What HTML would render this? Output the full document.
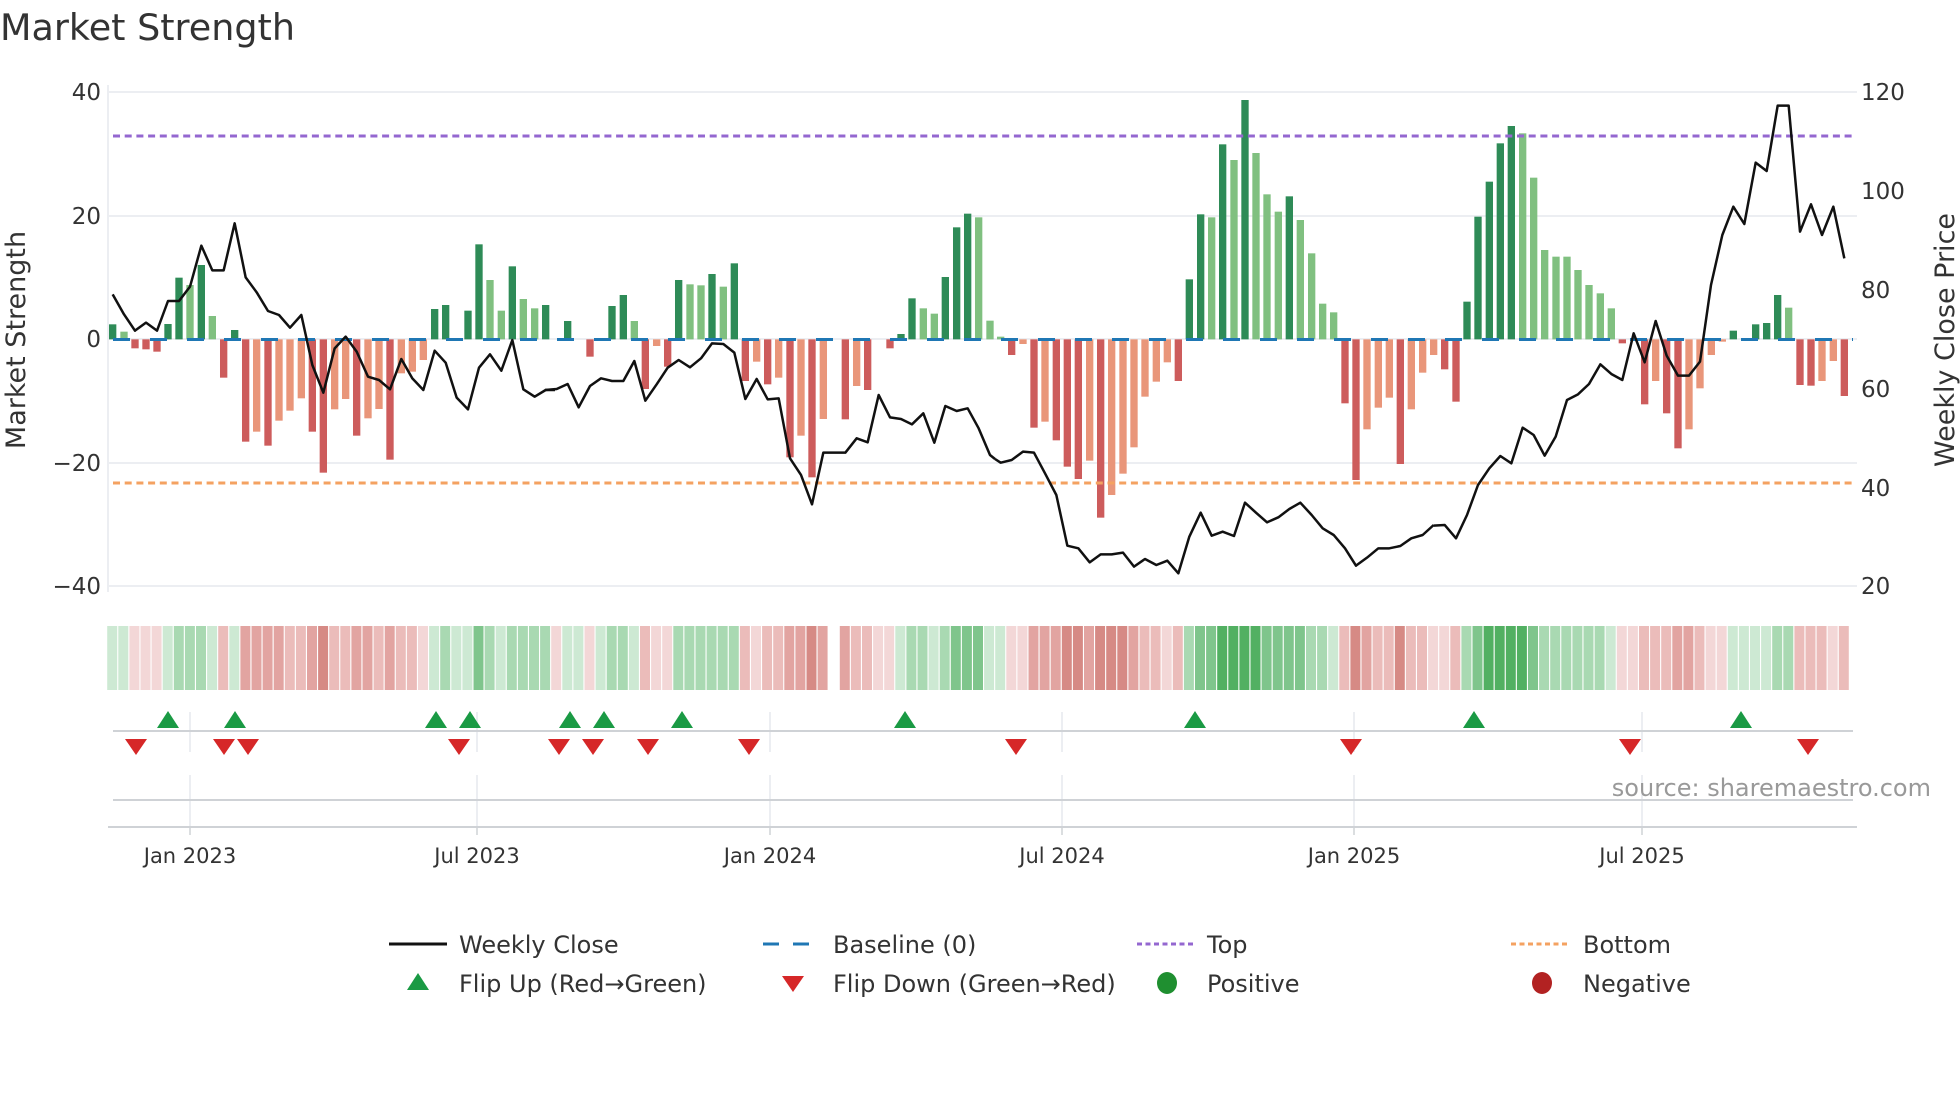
<!DOCTYPE html>
<html><head><meta charset="utf-8"><style>
html,body{margin:0;padding:0;background:#fff;}
svg{display:block;font-family:"DejaVu Sans","Liberation Sans",sans-serif;}
.dg{fill:#2e8b57}.lg{fill:#80c080}.r{fill:#cd5c5c}.lo{fill:#e9967a}
.ga{fill:#cde9d3}.gb{fill:#a9d9b2}.gc{fill:#7fc58c}.gd{fill:#52b062}
.ra{fill:#f3d7d7}.rb{fill:#ebbcba}.rc{fill:#e2a4a1}.rd{fill:#d68a85}
</style></head><body>
<svg width="1960" height="1102" viewBox="0 0 1960 1102" xmlns="http://www.w3.org/2000/svg">
<text x="0" y="40" font-size="36.5" fill="#333">Market Strength</text>
<!-- grid -->
<g stroke="#eceef2" stroke-width="2">
<line x1="108" y1="92" x2="1857" y2="92"/><line x1="108" y1="216" x2="1857" y2="216"/>
<line x1="108" y1="339" x2="1857" y2="339"/><line x1="108" y1="463" x2="1857" y2="463"/>
<line x1="108" y1="586" x2="1857" y2="586"/><line x1="108" y1="85" x2="108" y2="592"/>
</g>
<!-- left ticks -->
<g font-size="23" fill="#333" text-anchor="end">
<text x="101" y="100">40</text><text x="101" y="224">20</text><text x="101" y="347">0</text>
<text x="101" y="471">−20</text><text x="101" y="594">−40</text></g>
<g font-size="23" fill="#333">
<text x="1861" y="100">120</text><text x="1861" y="199">100</text><text x="1861" y="298">80</text>
<text x="1861" y="397">60</text><text x="1861" y="496">40</text><text x="1861" y="594">20</text></g>
<text transform="translate(25,340) rotate(-90)" font-size="27" fill="#333" text-anchor="middle">Market Strength</text>
<text transform="translate(1954,340) rotate(-90)" font-size="27" fill="#333" text-anchor="middle">Weekly Close Price</text>
<!-- bars -->
<g transform="translate(105,85) scale(0.33333)">
<rect class="dg" x="12" y="718" width="22" height="45"/><rect class="lg" x="46" y="740" width="22" height="23"/>
<rect class="r" x="79" y="763" width="22" height="27"/><rect class="r" x="112" y="763" width="22" height="30"/>
<rect class="r" x="145" y="763" width="22" height="37"/><rect class="dg" x="178" y="717" width="22" height="46"/>
<rect class="dg" x="211" y="578" width="22" height="185"/><rect class="lg" x="244" y="600" width="22" height="163"/>
<rect class="dg" x="278" y="540" width="22" height="223"/><rect class="lg" x="311" y="693" width="22" height="70"/>
<rect class="r" x="345" y="763" width="22" height="115"/><rect class="dg" x="378" y="735" width="22" height="28"/>
<rect class="r" x="411" y="763" width="22" height="307"/><rect class="lo" x="444" y="763" width="22" height="277"/>
<rect class="r" x="478" y="763" width="22" height="319"/><rect class="lo" x="511" y="763" width="22" height="244"/>
<rect class="lo" x="544" y="763" width="22" height="214"/><rect class="lo" x="578" y="763" width="22" height="177"/>
<rect class="r" x="611" y="763" width="22" height="277"/><rect class="r" x="644" y="763" width="22" height="400"/>
<rect class="lo" x="678" y="763" width="22" height="210"/><rect class="lo" x="711" y="763" width="22" height="179"/>
<rect class="r" x="744" y="763" width="22" height="289"/><rect class="lo" x="778" y="763" width="22" height="237"/>
<rect class="lo" x="811" y="763" width="22" height="209"/><rect class="r" x="844" y="763" width="22" height="361"/>
<rect class="lo" x="878" y="763" width="22" height="102"/><rect class="lo" x="911" y="763" width="22" height="97"/>
<rect class="lo" x="944" y="763" width="22" height="62"/><rect class="dg" x="978" y="672" width="22" height="91"/>
<rect class="dg" x="1011" y="660" width="22" height="103"/><rect class="dg" x="1078" y="677" width="22" height="86"/>
<rect class="dg" x="1111" y="478" width="22" height="285"/><rect class="lg" x="1144" y="585" width="22" height="178"/>
<rect class="lg" x="1178" y="677" width="22" height="86"/><rect class="dg" x="1211" y="544" width="22" height="219"/>
<rect class="lg" x="1244" y="642" width="22" height="121"/><rect class="lg" x="1278" y="670" width="22" height="93"/>
<rect class="dg" x="1311" y="660" width="22" height="103"/>
</g>
<g transform="translate(545,85) scale(0.33333)">
<rect class="dg" x="57" y="708" width="22" height="55"/><rect class="r" x="124" y="763" width="22" height="52"/>
<rect class="dg" x="190" y="663" width="22" height="100"/><rect class="dg" x="224" y="630" width="22" height="133"/>
<rect class="lg" x="257" y="708" width="22" height="55"/><rect class="r" x="290" y="763" width="22" height="149"/>
<rect class="lo" x="324" y="763" width="22" height="20"/><rect class="r" x="357" y="763" width="22" height="82"/>
<rect class="dg" x="390" y="585" width="22" height="178"/><rect class="lg" x="424" y="598" width="22" height="165"/>
<rect class="lg" x="457" y="601" width="22" height="162"/><rect class="dg" x="490" y="567" width="22" height="196"/>
<rect class="lg" x="524" y="605" width="22" height="158"/><rect class="dg" x="557" y="535" width="22" height="228"/>
<rect class="r" x="590" y="763" width="22" height="125"/><rect class="lo" x="624" y="763" width="22" height="67"/>
<rect class="r" x="657" y="763" width="22" height="135"/><rect class="lo" x="690" y="763" width="22" height="115"/>
<rect class="r" x="724" y="763" width="22" height="354"/><rect class="lo" x="757" y="763" width="22" height="289"/>
<rect class="r" x="790" y="763" width="22" height="414"/><rect class="lo" x="824" y="763" width="22" height="239"/>
<rect class="r" x="890" y="763" width="22" height="240"/><rect class="lo" x="924" y="763" width="22" height="140"/>
<rect class="r" x="957" y="763" width="22" height="152"/><rect class="r" x="1024" y="763" width="22" height="27"/>
<rect class="dg" x="1057" y="747" width="22" height="16"/><rect class="dg" x="1090" y="640" width="22" height="123"/>
<rect class="lg" x="1124" y="670" width="22" height="93"/><rect class="lg" x="1157" y="686" width="22" height="77"/>
<rect class="dg" x="1190" y="576" width="22" height="187"/><rect class="dg" x="1224" y="427" width="22" height="336"/>
<rect class="dg" x="1257" y="386" width="22" height="377"/><rect class="lg" x="1290" y="397" width="22" height="366"/>
<rect class="lg" x="1324" y="707" width="22" height="56"/>
</g>
<g transform="translate(985,85) scale(0.33333)">
<rect class="lg" x="36" y="755" width="22" height="8"/><rect class="r" x="69" y="763" width="22" height="47"/>
<rect class="lo" x="103" y="763" width="22" height="14"/><rect class="r" x="136" y="763" width="22" height="265"/>
<rect class="lo" x="169" y="763" width="22" height="247"/><rect class="r" x="203" y="763" width="22" height="303"/>
<rect class="r" x="236" y="763" width="22" height="382"/><rect class="r" x="269" y="763" width="22" height="419"/>
<rect class="lo" x="303" y="763" width="22" height="364"/><rect class="r" x="336" y="763" width="22" height="535"/>
<rect class="lo" x="369" y="763" width="22" height="467"/><rect class="lo" x="403" y="763" width="22" height="403"/>
<rect class="lo" x="436" y="763" width="22" height="324"/><rect class="lo" x="469" y="763" width="22" height="172"/>
<rect class="lo" x="503" y="763" width="22" height="127"/><rect class="lo" x="536" y="763" width="22" height="69"/>
<rect class="r" x="569" y="763" width="22" height="125"/><rect class="dg" x="602" y="583" width="22" height="180"/>
<rect class="dg" x="636" y="388" width="22" height="375"/><rect class="lg" x="669" y="397" width="22" height="366"/>
<rect class="dg" x="702" y="178" width="22" height="585"/><rect class="lg" x="736" y="225" width="22" height="538"/>
<rect class="dg" x="769" y="45" width="22" height="718"/><rect class="lg" x="802" y="204" width="22" height="559"/>
<rect class="lg" x="835" y="328" width="22" height="435"/><rect class="lg" x="869" y="380" width="22" height="383"/>
<rect class="dg" x="902" y="334" width="22" height="429"/><rect class="lg" x="935" y="405" width="22" height="358"/>
<rect class="lg" x="969" y="505" width="22" height="258"/><rect class="lg" x="1002" y="656" width="22" height="107"/>
<rect class="lg" x="1035" y="682" width="22" height="81"/><rect class="r" x="1069" y="763" width="22" height="192"/>
<rect class="r" x="1102" y="763" width="22" height="422"/><rect class="lo" x="1135" y="763" width="22" height="270"/>
<rect class="lo" x="1169" y="763" width="22" height="205"/><rect class="lo" x="1202" y="763" width="22" height="175"/>
<rect class="r" x="1235" y="763" width="22" height="374"/><rect class="lo" x="1268" y="763" width="22" height="210"/>
<rect class="lo" x="1302" y="763" width="22" height="100"/><rect class="lo" x="1335" y="763" width="22" height="47"/>
</g>
<g transform="translate(1425,85) scale(0.33333)">
<rect class="r" x="48" y="763" width="22" height="90"/><rect class="r" x="82" y="763" width="22" height="187"/>
<rect class="dg" x="115" y="650" width="22" height="113"/><rect class="dg" x="148" y="395" width="22" height="368"/>
<rect class="dg" x="182" y="290" width="22" height="473"/><rect class="dg" x="215" y="175" width="22" height="588"/>
<rect class="dg" x="248" y="123" width="22" height="640"/><rect class="lg" x="282" y="145" width="22" height="618"/>
<rect class="lg" x="315" y="278" width="22" height="485"/><rect class="lg" x="348" y="495" width="22" height="268"/>
<rect class="lg" x="382" y="515" width="22" height="248"/><rect class="lg" x="415" y="515" width="22" height="248"/>
<rect class="lg" x="448" y="555" width="22" height="208"/><rect class="lg" x="481" y="600" width="22" height="163"/>
<rect class="lg" x="515" y="625" width="22" height="138"/><rect class="lg" x="548" y="670" width="22" height="93"/>
<rect class="r" x="581" y="763" width="22" height="12"/><rect class="r" x="648" y="763" width="22" height="195"/>
<rect class="lo" x="681" y="763" width="22" height="125"/><rect class="r" x="714" y="763" width="22" height="222"/>
<rect class="r" x="748" y="763" width="22" height="327"/><rect class="lo" x="781" y="763" width="22" height="270"/>
<rect class="lo" x="814" y="763" width="22" height="147"/><rect class="lo" x="848" y="763" width="22" height="47"/>
<rect class="lo" x="881" y="763" width="22" height="7"/><rect class="dg" x="914" y="737" width="22" height="26"/>
<rect class="dg" x="981" y="718" width="22" height="45"/><rect class="dg" x="1014" y="714" width="22" height="49"/>
<rect class="dg" x="1047" y="630" width="22" height="133"/><rect class="lg" x="1080" y="668" width="22" height="95"/>
<rect class="r" x="1114" y="763" width="22" height="137"/><rect class="r" x="1147" y="763" width="22" height="139"/>
<rect class="lo" x="1180" y="763" width="22" height="125"/><rect class="lo" x="1214" y="763" width="22" height="65"/>
<rect class="r" x="1247" y="763" width="22" height="170"/>
</g>
<!-- reference lines -->
<line x1="113" y1="339.5" x2="1853" y2="339.5" stroke="#1f77b4" stroke-width="3" stroke-dasharray="17 20"/>
<line x1="113" y1="136" x2="1853" y2="136" stroke="#9467d0" stroke-width="3" stroke-dasharray="7 4.7"/>
<line x1="113" y1="483" x2="1853" y2="483" stroke="#f4a261" stroke-width="3" stroke-dasharray="7 4.7"/>
<!-- price line -->
<g fill="none" stroke="#111" stroke-width="7.5" stroke-linejoin="round">
<polyline transform="translate(105,85) scale(0.33333)" points="23,628 57,688 90,737 123,713 156,737 189,648 222,648 255,605 289,482 322,556 356,556 389,415 422,577 455,622 489,678 522,690 555,728 589,690 622,840 655,923 689,790 722,755 755,800 789,875 822,885 855,913 889,822 922,880 955,915 989,797 1022,833 1055,938 1089,973 1122,848 1155,808 1189,857 1222,765 1255,913 1289,935 1322,915 1350,915"/>
<polyline transform="translate(545,85) scale(0.33333)" points="0,915 35,912 68,897 101,967 135,903 168,880 201,888 235,888 268,828 301,947 335,898 368,848 401,825 435,847 468,820 501,775 535,777 568,803 601,942 635,882 668,943 701,940 735,1120 768,1170 801,1258 835,1103 868,1103 901,1103 935,1060 968,1072 1001,930 1035,997 1068,1002 1101,1018 1135,985 1168,1073 1201,963 1235,978 1268,970 1301,1030 1335,1110 1350,1122"/>
<polyline transform="translate(985,85) scale(0.33333)" points="30,1122 47,1133 80,1125 114,1100 147,1103 180,1165 214,1230 247,1382 280,1390 314,1432 347,1408 380,1408 414,1403 447,1445 480,1422 514,1440 547,1427 580,1465 613,1355 647,1283 680,1352 713,1340 747,1353 780,1253 813,1283 846,1312 880,1297 913,1272 946,1253 980,1290 1013,1330 1046,1350 1080,1390 1113,1442 1146,1418 1180,1390 1213,1390 1246,1383 1279,1360 1313,1350 1346,1320"/>
<polyline transform="translate(1425,85) scale(0.33333)" points="26,1322 59,1320 93,1360 126,1290 159,1200 193,1150 226,1113 259,1135 293,1028 326,1050 359,1112 392,1055 426,945 459,928 492,897 526,838 559,867 592,885 626,745 659,832 692,708 725,812 759,872 792,872 825,830 858,600 892,450 925,365 958,417 992,233 1025,258 1058,62 1091,62 1125,440 1158,358 1191,450 1225,365 1258,520"/>
</g>
<!-- heat strip -->
<g transform="translate(107.2,626) scale(11.1,1)">
<rect class="ga" x="0" width="0.9" height="64"/><rect class="ga" x="1" width="0.9" height="64"/><rect class="ra" x="2" width="0.9" height="64"/><rect class="ra" x="3" width="0.9" height="64"/><rect class="ra" x="4" width="0.9" height="64"/><rect class="ga" x="5" width="0.9" height="64"/><rect class="gb" x="6" width="0.9" height="64"/><rect class="gb" x="7" width="0.9" height="64"/><rect class="gb" x="8" width="0.9" height="64"/><rect class="ga" x="9" width="0.9" height="64"/>
<rect class="rb" x="10" width="0.9" height="64"/><rect class="ga" x="11" width="0.9" height="64"/><rect class="rc" x="12" width="0.9" height="64"/><rect class="rc" x="13" width="0.9" height="64"/><rect class="rc" x="14" width="0.9" height="64"/><rect class="rc" x="15" width="0.9" height="64"/><rect class="rb" x="16" width="0.9" height="64"/><rect class="rb" x="17" width="0.9" height="64"/><rect class="rc" x="18" width="0.9" height="64"/><rect class="rd" x="19" width="0.9" height="64"/>
<rect class="rb" x="20" width="0.9" height="64"/><rect class="rb" x="21" width="0.9" height="64"/><rect class="rc" x="22" width="0.9" height="64"/><rect class="rc" x="23" width="0.9" height="64"/><rect class="rb" x="24" width="0.9" height="64"/><rect class="rc" x="25" width="0.9" height="64"/><rect class="rb" x="26" width="0.9" height="64"/><rect class="rb" x="27" width="0.9" height="64"/><rect class="ra" x="28" width="0.9" height="64"/><rect class="ga" x="29" width="0.9" height="64"/>
<rect class="gb" x="30" width="0.9" height="64"/><rect class="ga" x="31" width="0.9" height="64"/><rect class="ga" x="32" width="0.9" height="64"/><rect class="gc" x="33" width="0.9" height="64"/><rect class="gb" x="34" width="0.9" height="64"/><rect class="ga" x="35" width="0.9" height="64"/><rect class="gb" x="36" width="0.9" height="64"/><rect class="gb" x="37" width="0.9" height="64"/><rect class="gb" x="38" width="0.9" height="64"/><rect class="gb" x="39" width="0.9" height="64"/>
<rect class="ra" x="40" width="0.9" height="64"/><rect class="ga" x="41" width="0.9" height="64"/><rect class="ga" x="42" width="0.9" height="64"/><rect class="ra" x="43" width="0.9" height="64"/><rect class="ga" x="44" width="0.9" height="64"/><rect class="gb" x="45" width="0.9" height="64"/><rect class="gb" x="46" width="0.9" height="64"/><rect class="ga" x="47" width="0.9" height="64"/><rect class="rb" x="48" width="0.9" height="64"/><rect class="ra" x="49" width="0.9" height="64"/>
<rect class="ra" x="50" width="0.9" height="64"/><rect class="gb" x="51" width="0.9" height="64"/><rect class="gb" x="52" width="0.9" height="64"/><rect class="gb" x="53" width="0.9" height="64"/><rect class="gb" x="54" width="0.9" height="64"/><rect class="gb" x="55" width="0.9" height="64"/><rect class="gb" x="56" width="0.9" height="64"/><rect class="rb" x="57" width="0.9" height="64"/><rect class="ra" x="58" width="0.9" height="64"/><rect class="rb" x="59" width="0.9" height="64"/>
<rect class="rb" x="60" width="0.9" height="64"/><rect class="rc" x="61" width="0.9" height="64"/><rect class="rc" x="62" width="0.9" height="64"/><rect class="rd" x="63" width="0.9" height="64"/><rect class="rc" x="64" width="0.9" height="64"/><rect class="rc" x="66" width="0.9" height="64"/><rect class="rb" x="67" width="0.9" height="64"/><rect class="rb" x="68" width="0.9" height="64"/><rect class="ra" x="69" width="0.9" height="64"/>
<rect class="ra" x="70" width="0.9" height="64"/><rect class="ga" x="71" width="0.9" height="64"/><rect class="gb" x="72" width="0.9" height="64"/><rect class="gb" x="73" width="0.9" height="64"/><rect class="ga" x="74" width="0.9" height="64"/><rect class="gb" x="75" width="0.9" height="64"/><rect class="gc" x="76" width="0.9" height="64"/><rect class="gc" x="77" width="0.9" height="64"/><rect class="gc" x="78" width="0.9" height="64"/><rect class="ga" x="79" width="0.9" height="64"/>
<rect class="ga" x="80" width="0.9" height="64"/><rect class="ra" x="81" width="0.9" height="64"/><rect class="ra" x="82" width="0.9" height="64"/><rect class="rc" x="83" width="0.9" height="64"/><rect class="rc" x="84" width="0.9" height="64"/><rect class="rc" x="85" width="0.9" height="64"/><rect class="rd" x="86" width="0.9" height="64"/><rect class="rd" x="87" width="0.9" height="64"/><rect class="rc" x="88" width="0.9" height="64"/><rect class="rd" x="89" width="0.9" height="64"/>
<rect class="rd" x="90" width="0.9" height="64"/><rect class="rd" x="91" width="0.9" height="64"/><rect class="rc" x="92" width="0.9" height="64"/><rect class="rb" x="93" width="0.9" height="64"/><rect class="rb" x="94" width="0.9" height="64"/><rect class="ra" x="95" width="0.9" height="64"/><rect class="rb" x="96" width="0.9" height="64"/><rect class="gb" x="97" width="0.9" height="64"/><rect class="gc" x="98" width="0.9" height="64"/><rect class="gc" x="99" width="0.9" height="64"/>
<rect class="gd" x="100" width="0.9" height="64"/><rect class="gd" x="101" width="0.9" height="64"/><rect class="gd" x="102" width="0.9" height="64"/><rect class="gd" x="103" width="0.9" height="64"/><rect class="gc" x="104" width="0.9" height="64"/><rect class="gc" x="105" width="0.9" height="64"/><rect class="gc" x="106" width="0.9" height="64"/><rect class="gc" x="107" width="0.9" height="64"/><rect class="gb" x="108" width="0.9" height="64"/><rect class="gb" x="109" width="0.9" height="64"/>
<rect class="ga" x="110" width="0.9" height="64"/><rect class="rb" x="111" width="0.9" height="64"/><rect class="rd" x="112" width="0.9" height="64"/><rect class="rc" x="113" width="0.9" height="64"/><rect class="rb" x="114" width="0.9" height="64"/><rect class="rb" x="115" width="0.9" height="64"/><rect class="rd" x="116" width="0.9" height="64"/><rect class="rb" x="117" width="0.9" height="64"/><rect class="rb" x="118" width="0.9" height="64"/><rect class="ra" x="119" width="0.9" height="64"/>
<rect class="ra" x="120" width="0.9" height="64"/><rect class="rb" x="121" width="0.9" height="64"/><rect class="gb" x="122" width="0.9" height="64"/><rect class="gc" x="123" width="0.9" height="64"/><rect class="gd" x="124" width="0.9" height="64"/><rect class="gd" x="125" width="0.9" height="64"/><rect class="gd" x="126" width="0.9" height="64"/><rect class="gd" x="127" width="0.9" height="64"/><rect class="gc" x="128" width="0.9" height="64"/><rect class="gb" x="129" width="0.9" height="64"/>
<rect class="gb" x="130" width="0.9" height="64"/><rect class="gb" x="131" width="0.9" height="64"/><rect class="gb" x="132" width="0.9" height="64"/><rect class="gb" x="133" width="0.9" height="64"/><rect class="gb" x="134" width="0.9" height="64"/><rect class="ga" x="135" width="0.9" height="64"/><rect class="ra" x="136" width="0.9" height="64"/><rect class="ra" x="137" width="0.9" height="64"/><rect class="rb" x="138" width="0.9" height="64"/><rect class="rb" x="139" width="0.9" height="64"/>
<rect class="rb" x="140" width="0.9" height="64"/><rect class="rc" x="141" width="0.9" height="64"/><rect class="rc" x="142" width="0.9" height="64"/><rect class="rb" x="143" width="0.9" height="64"/><rect class="ra" x="144" width="0.9" height="64"/><rect class="ra" x="145" width="0.9" height="64"/><rect class="ga" x="146" width="0.9" height="64"/><rect class="ga" x="147" width="0.9" height="64"/><rect class="ga" x="148" width="0.9" height="64"/><rect class="ga" x="149" width="0.9" height="64"/>
<rect class="gb" x="150" width="0.9" height="64"/><rect class="gb" x="151" width="0.9" height="64"/><rect class="rb" x="152" width="0.9" height="64"/><rect class="rb" x="153" width="0.9" height="64"/><rect class="rb" x="154" width="0.9" height="64"/><rect class="ra" x="155" width="0.9" height="64"/><rect class="rb" x="156" width="0.9" height="64"/>
</g>
<!-- marker area -->
<g stroke="#e6e9ee" stroke-width="1.5">
<line x1="190" y1="712" x2="190" y2="752"/><line x1="477" y1="712" x2="477" y2="752"/><line x1="770" y1="712" x2="770" y2="752"/><line x1="1062" y1="712" x2="1062" y2="752"/><line x1="1354" y1="712" x2="1354" y2="752"/><line x1="1642" y1="712" x2="1642" y2="752"/>
<line x1="190" y1="775" x2="190" y2="827"/><line x1="477" y1="775" x2="477" y2="827"/><line x1="770" y1="775" x2="770" y2="827"/><line x1="1062" y1="775" x2="1062" y2="827"/><line x1="1354" y1="775" x2="1354" y2="827"/><line x1="1642" y1="775" x2="1642" y2="827"/>
</g>
<line x1="113" y1="731" x2="1853" y2="731" stroke="#cfd2d6" stroke-width="2"/>
<line x1="113" y1="800" x2="1853" y2="800" stroke="#cfd2d6" stroke-width="2"/>
<line x1="108" y1="827" x2="1857" y2="827" stroke="#cfd2d6" stroke-width="2"/>
<g fill="#1a9a44">
<path d="M157,728h22l-11,-17z"/><path d="M224,728h22l-11,-17z"/><path d="M425,728h22l-11,-17z"/><path d="M459,728h22l-11,-17z"/><path d="M559,728h22l-11,-17z"/><path d="M593,728h22l-11,-17z"/><path d="M671,728h22l-11,-17z"/><path d="M894,728h22l-11,-17z"/><path d="M1184,728h22l-11,-17z"/><path d="M1463,728h22l-11,-17z"/><path d="M1730,728h22l-11,-17z"/>
</g>
<g fill="#d62728">
<path d="M125,739h22l-11,16z"/><path d="M213,739h22l-11,16z"/><path d="M237,739h22l-11,16z"/><path d="M448,739h22l-11,16z"/><path d="M548,739h22l-11,16z"/><path d="M582,739h22l-11,16z"/><path d="M637,739h22l-11,16z"/><path d="M738,739h22l-11,16z"/><path d="M1005,739h22l-11,16z"/><path d="M1340,739h22l-11,16z"/><path d="M1619,739h22l-11,16z"/><path d="M1797,739h22l-11,16z"/>
</g>
<text x="1931" y="796" font-size="24" fill="#999" text-anchor="end">source: sharemaestro.com</text>
<g stroke="#cfd2d6" stroke-width="1.5">
<line x1="190" y1="827" x2="190" y2="835"/><line x1="477" y1="827" x2="477" y2="835"/><line x1="770" y1="827" x2="770" y2="835"/><line x1="1062" y1="827" x2="1062" y2="835"/><line x1="1354" y1="827" x2="1354" y2="835"/><line x1="1642" y1="827" x2="1642" y2="835"/>
</g>
<g font-size="21" fill="#333" text-anchor="middle">
<text x="190" y="863">Jan 2023</text><text x="477" y="863">Jul 2023</text><text x="770" y="863">Jan 2024</text><text x="1062" y="863">Jul 2024</text><text x="1354" y="863">Jan 2025</text><text x="1642" y="863">Jul 2025</text>
</g>
<!-- legend -->
<g font-size="24" fill="#333">
<line x1="389" y1="944" x2="447" y2="944" stroke="#111" stroke-width="3"/>
<text x="459" y="953">Weekly Close</text>
<line x1="763" y1="944" x2="817" y2="944" stroke="#1f77b4" stroke-width="3" stroke-dasharray="16 14"/>
<text x="833" y="953">Baseline (0)</text>
<line x1="1137" y1="944" x2="1193" y2="944" stroke="#9467d0" stroke-width="3" stroke-dasharray="5 3.5"/>
<text x="1207" y="953">Top</text>
<line x1="1511" y1="944" x2="1567" y2="944" stroke="#f4a261" stroke-width="3" stroke-dasharray="5 3.5"/>
<text x="1583" y="953">Bottom</text>
<path d="M407,990h22l-11,-17z" fill="#1a9a44"/>
<text x="459" y="992">Flip Up (Red→Green)</text>
<path d="M782,976h22l-11,16z" fill="#d62728"/>
<text x="833" y="992">Flip Down (Green→Red)</text>
<ellipse cx="1167" cy="983" rx="10" ry="11" fill="#1f8f30"/>
<text x="1207" y="992">Positive</text>
<ellipse cx="1542" cy="983" rx="10" ry="11" fill="#b22222"/>
<text x="1583" y="992">Negative</text>
</g>
</svg>
</body></html>
